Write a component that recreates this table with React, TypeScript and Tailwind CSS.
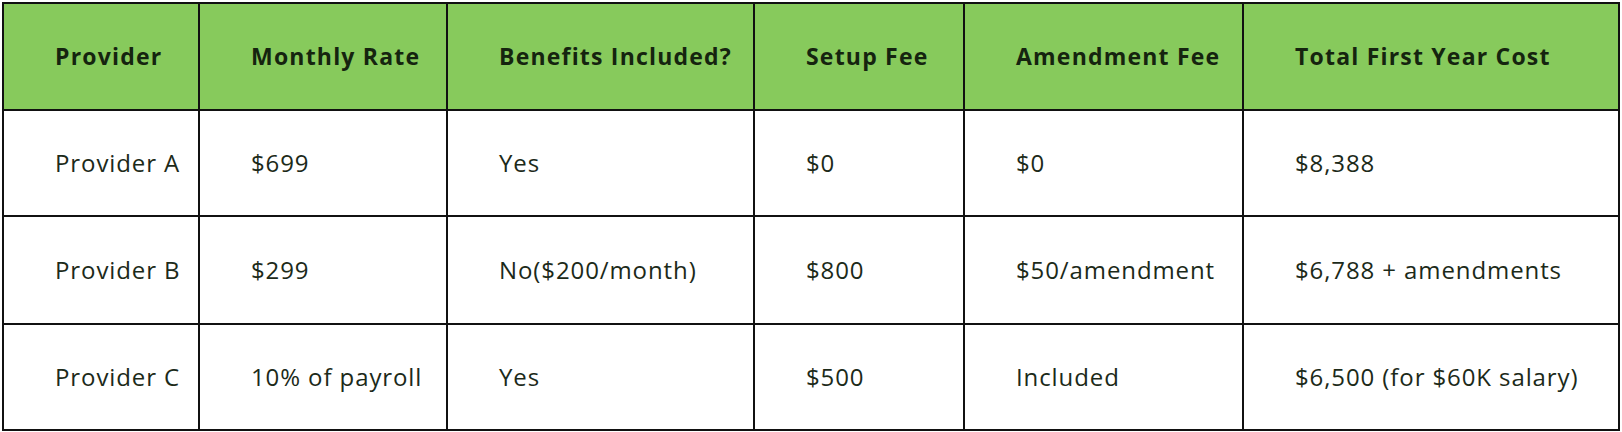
const headers = ["Provider", "Monthly Rate", "Benefits Included?", "Setup Fee", "Amendment Fee", "Total First Year Cost"];

const rows = [
  ["Provider A", "$699", "Yes", "$0", "$0", "$8,388"],
  ["Provider B", "$299", "No($200/month)", "$800", "$50/amendment", "$6,788 + amendments"],
  ["Provider C", "10% of payroll", "Yes", "$500", "Included", "$6,500 (for $60K salary)"],
];

const rowHeights = ["h-[106px]", "h-[108px]", "h-[106px]"];

export default function App() {
  return (
    <div className="min-h-screen bg-white pl-[2px] pt-[2px] font-['Open_Sans',sans-serif]">
      <div className="grid w-[1618px] grid-cols-[196px_248px_307px_210px_279px_376px] border-l-2 border-t-2 border-[#111]">
        {/* header */}
        {headers.map((h) => (
          <div
            key={h}
            className="flex h-[107px] items-center whitespace-nowrap border-b-2 border-r-2 border-[#111] bg-[#87ca5c] pl-[51px] text-[23px] font-bold tracking-[1.2px] text-[#15240f]"
          >
            {h}
          </div>
        ))}

        {/* body */}
        {rows.map((row, r) =>
          row.map((cell, c) => (
            <div
              key={`${r}-${c}`}
              className={`flex ${rowHeights[r]} items-center whitespace-nowrap border-b-2 border-r-2 border-[#111] pl-[51px] text-[24px] tracking-[0.9px] text-[#1c2a19]`}
            >
              {cell}
            </div>
          ))
        )}
      </div>
    </div>
  );
}
